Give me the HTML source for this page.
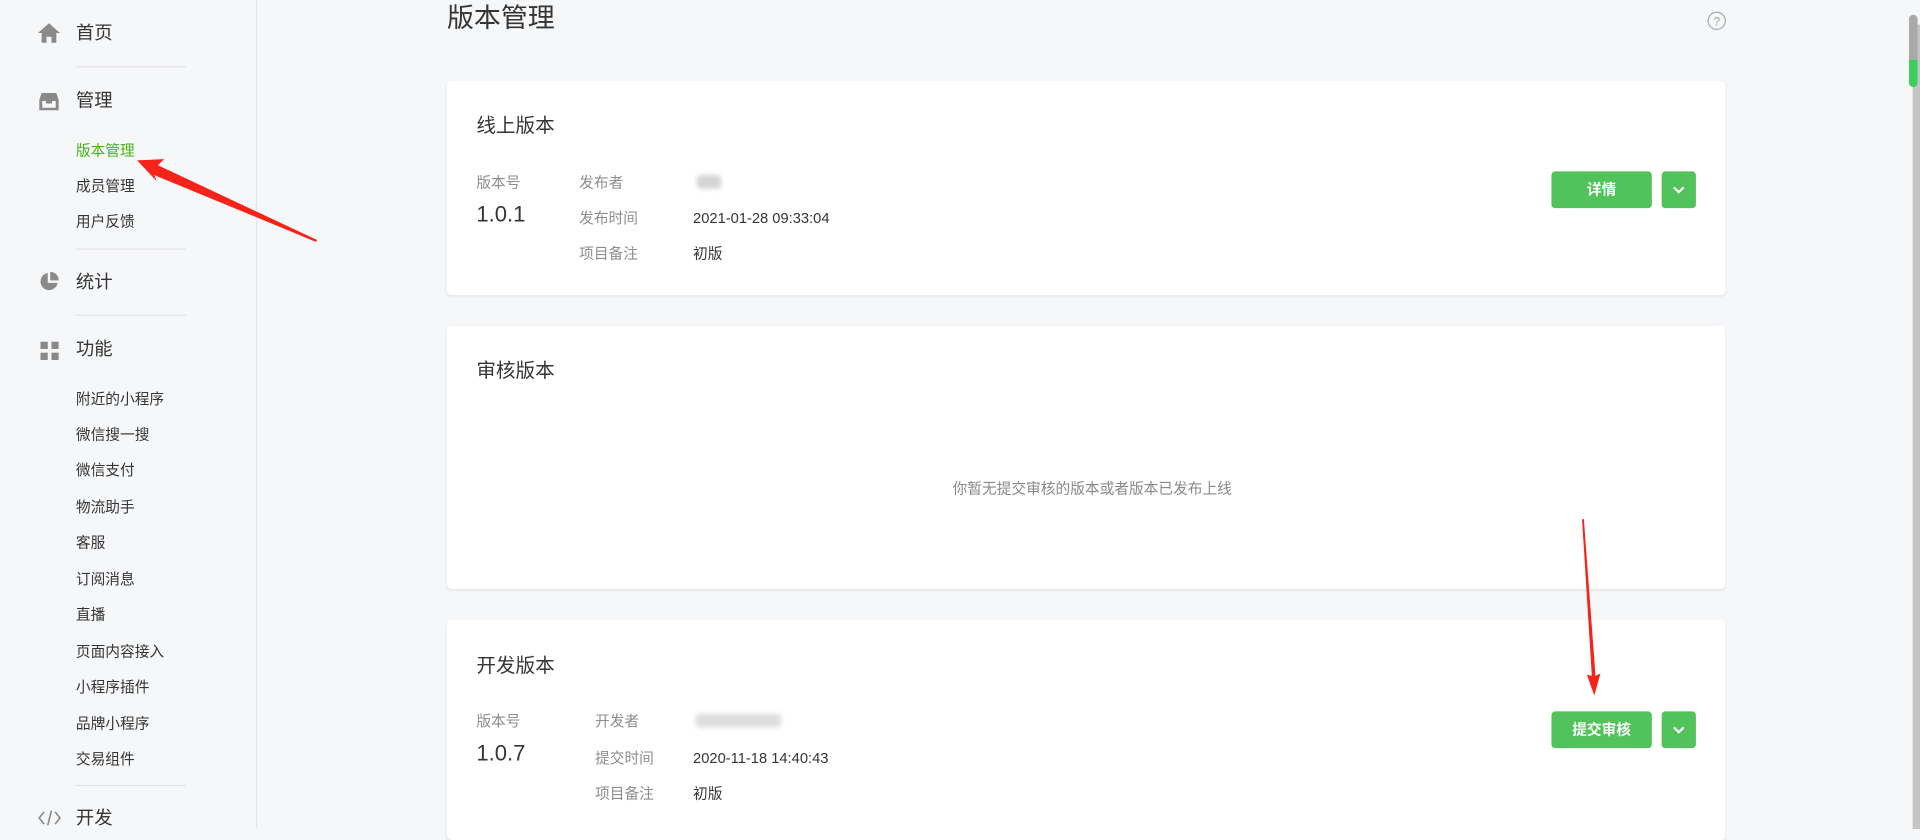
<!DOCTYPE html>
<html><head><meta charset="utf-8"><style>
html,body{margin:0;padding:0;width:1920px;height:829px;overflow:hidden;background:#f6f7f9;}
#w{position:absolute;left:0;top:0;width:1568px;height:677px;transform:scale(1.22449);transform-origin:0 0;font-family:"Liberation Sans","Noto Sans CJK SC",sans-serif;color:#353535;}
.a{position:absolute;white-space:nowrap;line-height:1;}
.side{position:absolute;left:0;top:0;width:209px;height:677px;border-right:1px solid #e7e7eb;background:#f6f7f9;}
.m{font-size:15px;color:#353535;}
.s{font-size:12px;color:#353535;left:62px;}
.hr{position:absolute;left:62px;width:90px;height:1px;background:#e4e4e8;}
.card{position:absolute;left:365px;width:1044px;background:#fff;border-radius:4px;box-shadow:0 1px 2px rgba(0,0,0,.08);}
.ct{font-size:16px;color:#353535;}
.lb{font-size:12px;color:#8d8d8d;}
.vl{font-size:12px;color:#353535;}
.vn{font-size:18px;color:#353535;}
.btn{position:absolute;background:#52c25b;border-radius:3px;color:#fff;font-size:12px;font-weight:bold;text-align:center;line-height:30px;height:30px;}
.blur{position:absolute;background:#d4d4d4;filter:blur(2px);border-radius:3px;}
</style></head><body><div id="w">
<div class="side"></div>
<svg class="a" style="left:31px;top:19px" width="18" height="16" viewBox="0 0 18 16"><path d="M9 0 L18 8 H15 V16 H11 V11 H7 V16 H3 V8 H0 Z" fill="#8a8a8a"/></svg>
<div class="a m" style="left:62px;top:20px">首页</div>
<div class="hr" style="top:54px"></div>
<svg class="a" style="left:32px;top:75px" width="16" height="16" viewBox="0 0 16 16"><path d="M2 1 H14 L16 7 V15 H0 V7 Z" fill="#8a8a8a"/><path d="M2.5 7.5 H5.5 V9.5 H10.5 V7.5 H13.5 V13 H2.5 Z" fill="#f6f7f9"/></svg>
<div class="a m" style="left:62px;top:75px">管理</div>
<div class="a s" style="top:117px;color:#48b21b">版本管理</div>
<div class="a s" style="top:146px">成员管理</div>
<div class="a s" style="top:175px">用户反馈</div>
<div class="hr" style="top:203px"></div>
<svg class="a" style="left:32px;top:222px" width="16" height="16" viewBox="0 0 16 16"><path d="M7 1 A7 7 0 1 0 15 9 H7 Z" fill="#8a8a8a"/><path d="M9 0 A7 7 0 0 1 16 7 H9 Z" fill="#8a8a8a"/></svg>
<div class="a m" style="left:62px;top:223px">统计</div>
<div class="hr" style="top:257px"></div>
<svg class="a" style="left:33px;top:279px" width="15" height="15" viewBox="0 0 15 15"><rect x="0" y="0" width="6" height="6" fill="#8a8a8a"/><rect x="9" y="0" width="6" height="6" fill="#8a8a8a"/><rect x="0" y="9" width="6" height="6" fill="#8a8a8a"/><rect x="9" y="9" width="6" height="6" fill="#8a8a8a"/></svg>
<div class="a m" style="left:62px;top:278px">功能</div>
<div class="a s" style="top:320px">附近的小程序</div>
<div class="a s" style="top:349px">微信搜一搜</div>
<div class="a s" style="top:378px">微信支付</div>
<div class="a s" style="top:408px">物流助手</div>
<div class="a s" style="top:437px">客服</div>
<div class="a s" style="top:467px">订阅消息</div>
<div class="a s" style="top:496px">直播</div>
<div class="a s" style="top:526px">页面内容接入</div>
<div class="a s" style="top:555px">小程序插件</div>
<div class="a s" style="top:585px">品牌小程序</div>
<div class="a s" style="top:614px">交易组件</div>
<div class="hr" style="top:641px"></div>
<svg class="a" style="left:31px;top:661px" width="19" height="14" viewBox="0 0 19 14"><path d="M5 2 L1 7 L5 12 M14 2 L18 7 L14 12 M11 1 L8 13" stroke="#8a8a8a" stroke-width="1.3" fill="none"/></svg>
<div class="a m" style="left:62px;top:661px">开发</div>

<div class="a" style="left:365px;top:4px;font-size:22px;color:#353535">版本管理</div>
<svg class="a" style="left:1394px;top:9px" width="16" height="16" viewBox="0 0 16 16"><circle cx="8" cy="8" r="7" stroke="#aaa" fill="none"/><text x="8" y="12" font-size="10" text-anchor="middle" fill="#aaa" font-family="Liberation Sans">?</text></svg>

<div class="card" style="top:66px;height:175px"></div>
<div class="a ct" style="left:389px;top:96px">线上版本</div>
<div class="a lb" style="left:389px;top:143px">版本号</div>
<div class="a vn" style="left:389px;top:166px">1.0.1</div>
<div class="a lb" style="left:473px;top:143px">发布者</div>
<div class="blur" style="left:569px;top:143px;width:20px;height:11px"></div>
<div class="a lb" style="left:473px;top:172px">发布时间</div>
<div class="a vl" style="left:566px;top:172px">2021-01-28 09:33:04</div>
<div class="a lb" style="left:473px;top:201px">项目备注</div>
<div class="a vl" style="left:566px;top:201px">初版</div>
<div class="btn" style="left:1267px;top:140px;width:82px">详情</div>
<div class="btn" style="left:1357px;top:140px;width:28px"><svg width="10" height="30" viewBox="0 0 10 30"><path d="M1 13 L5 17 L9 13" stroke="#fff" stroke-width="1.8" fill="none"/></svg></div>

<div class="card" style="top:266px;height:215px"></div>
<div class="a ct" style="left:389px;top:296px">审核版本</div>
<div class="a lb" style="left:778px;top:393px;color:#888">你暂无提交审核的版本或者版本已发布上线</div>

<div class="card" style="top:506px;height:180px"></div>
<div class="a ct" style="left:389px;top:537px">开发版本</div>
<div class="a lb" style="left:389px;top:583px">版本号</div>
<div class="a vn" style="left:389px;top:606px">1.0.7</div>
<div class="a lb" style="left:486px;top:583px">开发者</div>
<div class="blur" style="left:568px;top:583px;width:70px;height:11px;background:#dedede"></div>
<div class="a lb" style="left:486px;top:613px">提交时间</div>
<div class="a vl" style="left:566px;top:613px">2020-11-18 14:40:43</div>
<div class="a lb" style="left:486px;top:642px">项目备注</div>
<div class="a vl" style="left:566px;top:642px">初版</div>
<div class="btn" style="left:1267px;top:581px;width:82px">提交审核</div>
<div class="btn" style="left:1357px;top:581px;width:28px"><svg width="10" height="30" viewBox="0 0 10 30"><path d="M1 13 L5 17 L9 13" stroke="#fff" stroke-width="1.8" fill="none"/></svg></div>

<div class="a" style="left:1562px;top:20px;width:6px;height:657px;background:#c4c4c4"></div>
<div class="a" style="left:1559px;top:12px;width:7px;height:59px;background:#a9a9a9;border-radius:4px"></div>
<div class="a" style="left:1559px;top:49px;width:7px;height:22px;background:#3ccf5e;border-radius:0 0 4px 4px"></div>

<svg class="a" style="left:0;top:0" width="1568" height="677">
<path d="M259 196 L258 197.5 L126 143 L128 148 L112 131 L134 130 L129 135 Z" fill="#f5231a"/>
<path d="M1292 424 L1293.5 424 L1303 552 L1307 550 L1302 568 L1296 551 L1300 552 Z" fill="#f5231a"/>
</svg>
</div></body></html>
